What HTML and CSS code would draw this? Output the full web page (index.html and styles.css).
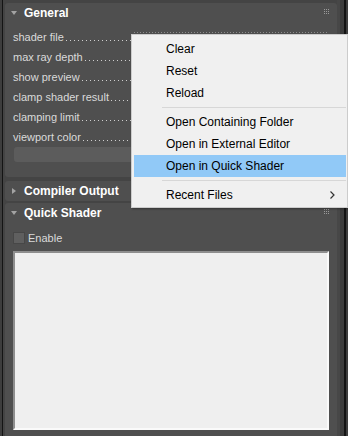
FILE: index.html
```html
<!DOCTYPE html>
<html lang="en">
<head>
    <meta charset="UTF-8">
    <title>Shader Parameters</title>
    <link rel="stylesheet" href="styles.css">
</head>
<body>

    <div class="frame">
        <div class="rollouts">

            <section class="rollout general">
                <div class="rollout-head">
                    <svg class="twisty" width="6" height="4" viewBox="0 0 6 4"><polygon points="0,0 6,0 3,4" fill="#a3a3a3"/></svg>
                    <span class="title">General</span>
                    <svg class="grip" width="5" height="5" viewBox="0 0 5 5" fill="#9a9a9a"><rect x="0" y="0" width="1" height="1"/><rect x="2" y="0" width="1" height="1"/><rect x="4" y="0" width="1" height="1"/><rect x="0" y="2" width="1" height="1"/><rect x="2" y="2" width="1" height="1"/><rect x="4" y="2" width="1" height="1"/><rect x="0" y="4" width="1" height="1"/><rect x="2" y="4" width="1" height="1"/><rect x="4" y="4" width="1" height="1"/></svg>
                </div>
                <div class="rows">
                    <div class="row"><span class="label">shader file</span><span class="leader"></span><span class="ctl focused"></span></div>
                    <div class="row"><span class="label">max ray depth</span><span class="leader"></span><span class="ctl"></span></div>
                    <div class="row"><span class="label">show preview</span><span class="leader"></span><span class="ctl"></span></div>
                    <div class="row"><span class="label">clamp shader result</span><span class="leader"></span><span class="ctl"></span></div>
                    <div class="row"><span class="label">clamping limit</span><span class="leader"></span><span class="ctl"></span></div>
                    <div class="row"><span class="label">viewport color</span><span class="leader"></span><span class="ctl"></span></div>
                </div>
                <div class="bar"></div>
            </section>

            <section class="rollout collapsed">
                <div class="rollout-head">
                    <svg class="twisty" width="4" height="6" viewBox="0 0 4 6"><polygon points="0,0 4,3 0,6" fill="#a3a3a3"/></svg>
                    <span class="title">Compiler Output</span>
                </div>
            </section>

            <section class="rollout quick">
                <div class="rollout-head">
                    <svg class="twisty" width="6" height="4" viewBox="0 0 6 4"><polygon points="0,0 6,0 3,4" fill="#a3a3a3"/></svg>
                    <span class="title">Quick Shader</span>
                    <svg class="grip" width="5" height="5" viewBox="0 0 5 5" fill="#9a9a9a"><rect x="0" y="0" width="1" height="1"/><rect x="2" y="0" width="1" height="1"/><rect x="4" y="0" width="1" height="1"/><rect x="0" y="2" width="1" height="1"/><rect x="2" y="2" width="1" height="1"/><rect x="4" y="2" width="1" height="1"/><rect x="0" y="4" width="1" height="1"/><rect x="2" y="4" width="1" height="1"/><rect x="4" y="4" width="1" height="1"/></svg>
                </div>
                <label class="check"><span class="box"></span>Enable</label>
                <div class="editor"></div>
            </section>

        </div>
        <div class="scroll"></div>
    </div>

    <div class="menu">
        <div class="item">Clear</div>
        <div class="item">Reset</div>
        <div class="item">Reload</div>
        <div class="sep"></div>
        <div class="item">Open Containing Folder</div>
        <div class="item">Open in External Editor</div>
        <div class="item active">Open in Quick Shader</div>
        <div class="sep"></div>
        <div class="item sub">Recent Files
            <svg class="chev" width="5" height="8" viewBox="0 0 5 8"><polyline points="0.5,0.5 4,4 0.5,7.5" fill="none" stroke="#333" stroke-width="1.2"/></svg>
        </div>
    </div>

</body>
</html>
```

FILE: styles.css
```css
body {
    margin: 0;
    height: 436px;
    overflow: hidden;
    background: #3d3d3d;
    font-family: "Liberation Sans", Arial, sans-serif;
    position: relative;
}

.frame {
    display: flex;
    height: 436px;
    margin: 0 2px;
    padding-left: 2px;
    border-left: 1px solid #141414;
    border-right: 2px solid #141414;
    background: #444;
}

.rollouts {
    width: 332px;
    display: flex;
    flex-direction: column;
}

.scroll {
    width: 7px;
    background: linear-gradient(to right, #474747 3px, #3d3d3d 3px);
}

.rollout {
    background: #4f4f4f;
    border-radius: 3px;
    margin-top: 3px;
}

.collapsed {
    margin-top: 4px;
}

.quick {
    margin-top: 2px;
    flex: 1;
    border-radius: 3px 3px 0 0;
}

.rollout-head {
    height: 20px;
    display: flex;
    align-items: center;
    position: relative;
}

.twisty {
    position: absolute;
    left: 6px;
    top: 8px;
}

.collapsed .twisty {
    left: 7px;
    top: 7px;
}

.title {
    margin-left: 19px;
    color: #fff;
    font-weight: bold;
    font-size: 12px;
}

.grip {
    position: absolute;
    right: 8px;
    top: 6px;
}

.rows {
    padding-top: 4px;
}

.row {
    display: flex;
    height: 20px;
    padding-left: 8px;
    color: #dadada;
    font-size: 11px;
    line-height: 20px;
}

.label {
    white-space: nowrap;
}

.leader {
    flex: 1;
    margin-left: 2px;
    background: linear-gradient(to right, #cfcfcf 1px, transparent 1px) 0 13px / 4px 1px repeat-x;
}

.ctl {
    width: 193px;
    height: 15px;
    align-self: flex-end;
    margin-right: 10px;
}

.ctl.focused {
    background: linear-gradient(to right, #8c8c8c 1px, transparent 1px) 0 0 / 3px 1px repeat-x;
}

.bar {
    height: 15px;
    margin: 0 10px 15px 9px;
    background: #5c5c5c;
    border-radius: 3px;
}

.check {
    display: flex;
    align-items: center;
    height: 20px;
    margin-top: 5px;
    padding-left: 8px;
    color: #dadada;
    font-size: 11px;
}

.box {
    width: 10px;
    height: 10px;
    margin-right: 3px;
    background: #5f5f5f;
    border: 1px solid #474747;
}

.editor {
    height: 175px;
    margin: 3px 8px 0 8px;
    background: #efefef;
    border: 2px solid;
    border-color: #8e8e8e #fafafa #fafafa #8e8e8e;
}

.menu {
    position: absolute;
    left: 131px;
    top: 34px;
    width: 212px;
    padding: 3px 1px 1px 2px;
    background: #f0f0f0;
    border: 1px solid #cccccc;
    box-shadow: 1px 1px 2px rgba(0, 0, 0, 0.35);
    font-size: 12px;
    color: #000;
}

.item {
    height: 22px;
    line-height: 22px;
    padding-left: 32px;
    position: relative;
}

.item.active {
    background: #91c9f7;
}

.sep {
    height: 1px;
    margin: 3px 0 3px 28px;
    background: #d7d7d7;
}

.chev {
    position: absolute;
    right: 11px;
    top: 7px;
}
```
